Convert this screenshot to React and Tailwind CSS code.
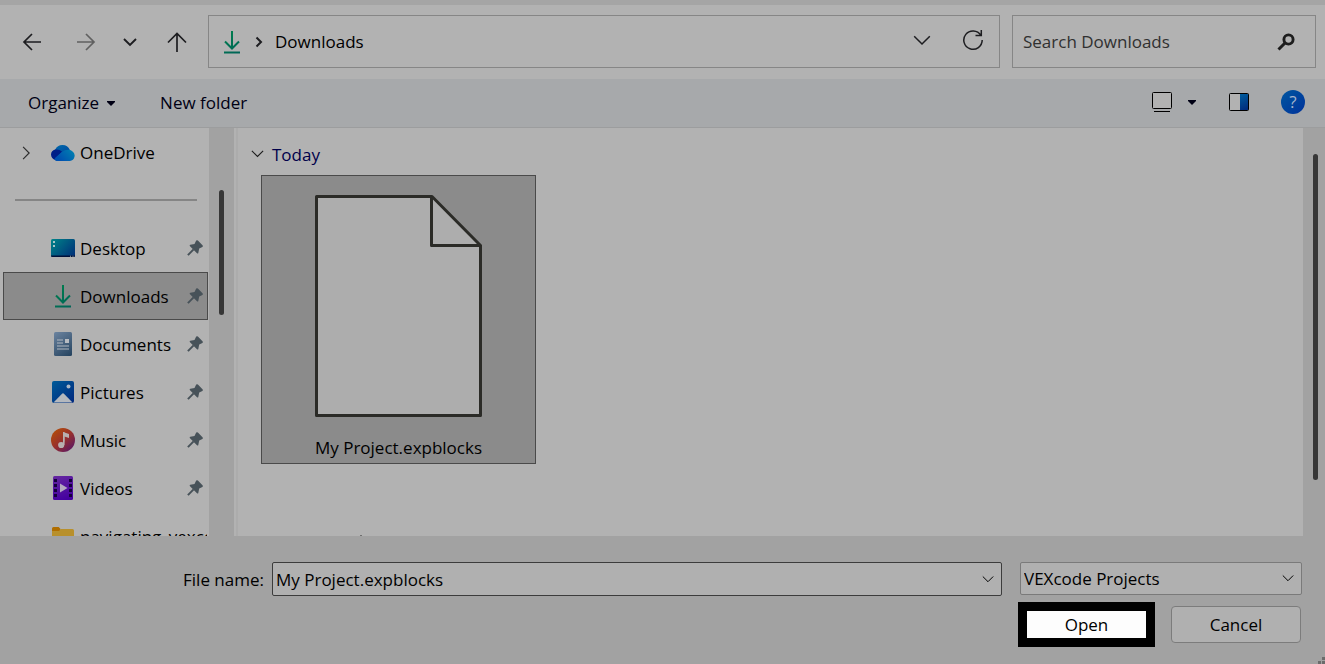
import { useState } from 'react'

const PLACES = [
  { id: 'desktop',   label: 'Desktop',   icon: DesktopIcon },
  { id: 'downloads', label: 'Downloads', icon: DownloadIcon },
  { id: 'documents', label: 'Documents', icon: DocumentsIcon },
  { id: 'pictures',  label: 'Pictures',  icon: PicturesIcon },
  { id: 'music',     label: 'Music',     icon: MusicIcon },
  { id: 'videos',    label: 'Videos',    icon: VideosIcon },
]

/* Icons */

function DownloadIcon() {
  return (
    <svg width="24" height="24" viewBox="0 0 24 24" fill="none" strokeWidth="2">
      <defs>
        <linearGradient id="dl" x1="4" y1="1" x2="20" y2="23" gradientUnits="userSpaceOnUse">
          <stop stopColor="#00804c" />
          <stop offset="1" stopColor="#006458" />
        </linearGradient>
      </defs>
      <path d="M12 1v17M5 11.5l7 7 7-7M4 22.5h16" stroke="url(#dl)" />
    </svg>
  )
}

function DesktopIcon() {
  return (
    <svg width="24" height="24" viewBox="0 0 24 24">
      <defs>
        <linearGradient id="desk" x1="2" y1="3" x2="22" y2="21" gradientUnits="userSpaceOnUse">
          <stop stopColor="#008088" />
          <stop offset="1" stopColor="#003078" />
        </linearGradient>
      </defs>
      <rect y="3" width="24" height="18" rx="1.5" fill="url(#desk)" />
      <path d="M0 19.5h24a1.5 1.5 0 0 1-1.5 1.5h-21A1.5 1.5 0 0 1 0 19.5z" fill="#00103a" />
      <path d="M2 5h2v2H2zM2 9h2v2H2z" fill="#a9c4c6" />
      <path d="M19 19.8h1v1h-1zM21.5 19.8h1v1h-1z" fill="#9aa" />
    </svg>
  )
}

function DocumentsIcon() {
  return (
    <svg width="24" height="24" viewBox="0 0 24 24">
      <defs>
        <linearGradient id="docs" x1="3" y1="0" x2="20" y2="24" gradientUnits="userSpaceOnUse">
          <stop stopColor="#6c84a0" />
          <stop offset="1" stopColor="#25435f" />
        </linearGradient>
      </defs>
      <rect x="3" width="18" height="24" rx="1.5" fill="url(#docs)" />
      <path d="M6 8h6M6 11h6M6 14h12M6 17h12" stroke="#b2b8bf" strokeWidth="1.2" />
      <rect x="14" y="7" width="4" height="4" fill="#b8bcc2" />
    </svg>
  )
}

function PicturesIcon() {
  return (
    <svg width="24" height="24" viewBox="0 0 24 24">
      <defs>
        <linearGradient id="pics" x1="2" y1="1" x2="22" y2="23" gradientUnits="userSpaceOnUse">
          <stop stopColor="#005a98" />
          <stop offset="1" stopColor="#00287e" />
        </linearGradient>
      </defs>
      <rect x="1" y="1" width="22" height="22" rx="2" fill="url(#pics)" />
      <path d="M2.5 22.5l8.3-8.600q1.200-1.200 2.400 0l8.300 8.600z" fill="#b4b8be" />
      <circle cx="17.500" cy="6.500" r="2" fill="#aab6c4" />
    </svg>
  )
}

function MusicIcon() {
  return (
    <svg width="24" height="24" viewBox="0 0 24 24">
      <defs>
        <linearGradient id="music" x1="3" y1="3" x2="20" y2="22" gradientUnits="userSpaceOnUse">
          <stop stopColor="#b04a0c" />
          <stop offset="0.5" stopColor="#98302c" />
          <stop offset="1" stopColor="#601a60" />
        </linearGradient>
      </defs>
      <circle cx="12" cy="12" r="12" fill="url(#music)" />
      <path d="M12 4l6 2v4l-4.500-1.500V17" fill="#b8b0b0" />
      <path d="M12 4h1.500v13H12z" fill="#b8b0b0" />
      <circle cx="10.200" cy="17" r="3.100" fill="#b8b0b0" />
    </svg>
  )
}

function VideosIcon() {
  return (
    <svg width="24" height="24" viewBox="0 0 24 24">
      <defs>
        <linearGradient id="vids" x1="6" y1="0" x2="14" y2="24" gradientUnits="userSpaceOnUse">
          <stop stopColor="#6426a0" />
          <stop offset="1" stopColor="#4400a0" />
        </linearGradient>
      </defs>
      <rect x="2" width="20" height="24" rx="1.5" fill="url(#vids)" />
      <path d="M3 3h3v3H3zM3 8h3v3H3zM3 13h3v3H3zM3 18h3v3H3zM18 3h3v3h-3zM18 8h3v3h-3zM18 13h3v3h-3zM18 18h3v3h-3z" fill="#14003c" />
      <path d="M9 7.5l7.500 4.500L9 16.500z" fill="#b4aac0" />
    </svg>
  )
}

function FolderIcon() {
  return (
    <svg width="24" height="24" viewBox="0 0 24 24">
      <path d="M1 4.500A1.500 1.500 0 0 1 2.500 3h5.200L9.500 5v4H1z" fill="#b06e00" />
      <path d="M1 7h7l2-2h11.500A1.500 1.500 0 0 1 23 6.500V20a1 1 0 0 1-1 1H2a1 1 0 0 1-1-1z" fill="#b8902c" />
    </svg>
  )
}

function OneDriveIcon() {
  return (
    <svg width="24" height="24" viewBox="0 0 24 24">
      <defs>
        <linearGradient id="od1" x1="5" y1="4" x2="14" y2="20" gradientUnits="userSpaceOnUse">
          <stop stopColor="#0068a8" />
          <stop offset="1" stopColor="#0040a0" />
        </linearGradient>
        <linearGradient id="od2" x1="22" y1="9" x2="10" y2="20" gradientUnits="userSpaceOnUse">
          <stop stopColor="#0080b0" />
          <stop offset="1" stopColor="#0050b0" />
        </linearGradient>
      </defs>
      <path d="M7 19A5.500 5.500 0 0 1 4.200 8.600 8 8 0 0 1 18.800 8.800L14 12z" fill="url(#od1)" />
      <path d="M4.500 19A6 6 0 0 1 0 13.500 5.500 5.500 0 0 1 4.200 8.600C7 8 9 9 11 10.500L4 18z" fill="#001e88" />
      <path d="M5.500 20C3.500 19.500 3 18 4.500 16.500L11 11C14 8.500 18.500 8 21 10A5.400 5.400 0 0 1 18.800 20z" fill="url(#od2)" />
    </svg>
  )
}

function PinIcon() {
  return (
    <svg width="16" height="16" viewBox="0 0 16 16" className="shrink-0" fill="#475259">
      <path d="M9.200.6q.9-.8 1.700 0l4.600 4.600q.8 1-.1 1.700L12.200 8.600l-.9 4.300q-.4 1.100-1.300.3L3 6.200q-.8-1 .3-1.400L7.500 3.900z" />
      <path d="M.9 15.100L6.600 9.400" stroke="#475259" strokeWidth="2" />
    </svg>
  )
}

function Chevron({ size = 12, className = '' }) {
  return (
    <svg width={size} height={size} viewBox="0 0 12 12" fill="none" stroke="currentColor" strokeWidth="1" className={className}>
      <path d="M.8 3.500L6 8.700l5.200-5.200" />
    </svg>
  )
}

function Caret() {
  return (
    <svg width="8" height="5" viewBox="0 0 8 5">
      <path d="M0 0h8v1L4 5 0 1z" fill="#000014" />
    </svg>
  )
}

function NavBar() {
  return (
    <div className="flex items-center bg-[#b2b2b2] pt-[10px] pr-[9px] pb-[11px] text-[#1d1d20]">
      <button aria-label="Back" className="flex w-16 justify-center">
        <svg width="20" height="20" viewBox="0 0 20 20" fill="none" stroke="currentColor" strokeWidth="1.700">
          <path d="M19 10H2M10 2l-8 8 8 8" />
        </svg>
      </button>
      <button aria-label="Forward" className="flex w-11 justify-center text-[#606060]">
        <svg width="20" height="20" viewBox="0 0 20 20" fill="none" stroke="currentColor" strokeWidth="1.700">
          <path d="M1 10h17M10 2l8 8-8 8" />
        </svg>
      </button>
      <button aria-label="Recent locations" className="flex w-11 justify-center">
        <svg width="14" height="14" viewBox="0 0 14 14" fill="none" stroke="currentColor" strokeWidth="1.900">
          <path d="M1 4l6 6 6-6" />
        </svg>
      </button>
      <button aria-label="Up" className="flex w-[50px] justify-center">
        <svg width="20" height="20" viewBox="0 0 20 20" fill="none" stroke="currentColor" strokeWidth="1.700">
          <path d="M10 20V2M1 10.500L10 1.500l9 9" />
        </svg>
      </button>

      <div className="ml-[6px] flex h-[53px] flex-1 items-center border border-[#868686] pr-[15px] pl-[11px]">
        <DownloadIcon />
        <svg width="8" height="12" viewBox="0 0 8 12" fill="none" stroke="currentColor" strokeWidth="2" className="ml-[11px]">
          <path d="M1.500 1.500L6 6l-4.500 4.500" />
        </svg>
        <a href="#downloads" className="ml-3 flex-1 text-black">Downloads</a>
        <div className="flex items-center gap-[31px] pb-1">
          <button aria-label="Previous locations"><Chevron size={18} /></button>
          <button aria-label="Refresh">
            <svg width="22" height="22" viewBox="0 0 22 22" fill="none" stroke="currentColor" strokeWidth="1.500">
              <path d="M20.200 11A9.200 9.200 0 1 1 18.800 6.200M19.300 1v5.500h-5.800" />
            </svg>
          </button>
        </div>
      </div>

      <div className="ml-3 flex h-[53px] w-[304px] items-center border border-[#868686] pr-5 pl-[10px]">
        <input type="search" aria-label="Search Downloads" placeholder="Search Downloads"
          className="min-w-0 flex-1 bg-transparent outline-none placeholder:text-[#303030]" />
        <svg width="18" height="18" viewBox="0 0 18 18" fill="none" stroke="#1d1d1d">
          <circle cx="11.500" cy="6.500" r="4.600" strokeWidth="2.900" />
          <path d="M8 10l-6.500 6.500" strokeWidth="3" />
        </svg>
      </div>
    </div>
  )
}

function Toolbar() {
  return (
    <div className="flex h-[49px] items-center border-b border-[#9c9d9e] bg-[#a7a9ab] pr-5 pl-7 text-[#000014]">
      <button className="flex items-center gap-2">Organize <Caret /></button>
      <button className="ml-[45px]">New folder</button>
      <div className="ml-auto flex items-center pb-0.5">
        <button aria-label="Change view" className="flex items-center gap-[15px]">
          <svg width="21" height="21" viewBox="0 0 21 21" fill="none" stroke="#000">
            <rect x=".5" y=".5" width="19" height="16" rx="1" fill="#b2b2b2" />
            <path d="M2 19.500h16" />
          </svg>
          <Caret />
        </button>
        <button aria-label="Preview pane" className="ml-[33px]">
          <svg width="20" height="18" viewBox="0 0 20 18">
            <defs>
              <linearGradient id="pane" x1="11" y1="0" x2="20" y2="18" gradientUnits="userSpaceOnUse">
                <stop stopColor="#0060a0" />
                <stop offset="1" stopColor="#002478" />
              </linearGradient>
            </defs>
            <rect x=".5" y=".5" width="19" height="17" rx="1" fill="#b2b2b2" />
            <path d="M11 1h8.500v16H11z" fill="url(#pane)" />
            <rect x=".5" y=".5" width="19" height="17" rx="1" fill="none" stroke="#000" />
          </svg>
        </button>
        <button aria-label="Help" className="ml-8 flex h-6 w-6 items-center justify-center rounded-full bg-linear-to-br from-[#0056a0] to-[#00309a] text-[#a5b5cc]">
          ?
        </button>
      </div>
    </div>
  )
}

function Sidebar({ place, onSelect }) {
  return (
    <nav className="flex w-[234px] shrink-0 overflow-hidden bg-[#b2b2b2]">
      <div className="w-[209px] pr-px pl-[3px]">
        <a href="#onedrive" className="flex h-12 items-center pt-px pl-4">
          <Chevron size={14} className="-rotate-90 text-[#2c2c2c]" />
          <span className="ml-[18px]"><OneDriveIcon /></span>
          <span className="ml-[5px]">OneDrive</span>
        </a>
        <div className="flex h-12 items-center pr-[11px] pl-3">
          <hr className="w-full border-t-2 border-[#858585]" />
        </div>
        {PLACES.map(p => (
          <button key={p.id} onClick={() => onSelect(p.id)}
            className={`flex h-12 w-full items-center border pr-1 pl-[47px] ${place === p.id ? 'border-[#4a4a4a] bg-[#8b8b8b]' : 'border-transparent'}`}>
            <p.icon />
            <span className="ml-[5px] flex-1 pt-px text-left">{p.label}</span>
            <PinIcon />
          </button>
        ))}
        <button className="flex h-12 w-full items-center overflow-hidden border border-transparent pl-[47px]">
          <span className="shrink-0"><FolderIcon /></span>
          <span className="ml-[5px] whitespace-nowrap pt-px">navigating_vexcode</span>
        </button>
      </div>
      <div className="flex-1 bg-[#a2a2a2] pt-[62px] pl-[10px]">
        <div className="h-[125px] w-[5px] rounded-full bg-[#373737]" />
      </div>
    </nav>
  )
}

function FileList({ file }) {
  return (
    <main className="flex min-w-0 flex-1 bg-[#b2b2b2]">
      <div className="ml-0.5 w-0.5 bg-[#acacac]" />
      <section className="flex flex-1 flex-col items-start pt-[11px] pl-[13px]">
        <button className="flex h-8 items-center gap-2 text-[#00004a]">
          <Chevron size={13} className="mb-1 text-[#1c1c1c]" /> Today
        </button>
        <button className="mt-1 ml-[10px] flex w-[275px] flex-col items-center border border-[#4a4a4a] bg-[#8b8b8b] pt-[19px] pb-px">
          <svg width="167" height="222" viewBox="0 0 167 222" fill="#adadad" stroke="#2b2b27" strokeWidth="3" strokeLinejoin="round">
            <path d="M1.500 1.500h115.500l48.500 49v170H1.500z" />
            <path d="M116.500 1.500v49h49" fill="none" />
          </svg>
          <span className="mt-[17px] leading-7">{file}</span>
        </button>
        <span className="mt-auto ml-[109px] h-px w-0.5 bg-[#707070]" />
      </section>
      <div className="w-[22px] bg-[#a2a2a2] pt-[26px] pl-[10px]">
        <div className="h-[326px] w-[5px] rounded-full bg-[#373737]" />
      </div>
    </main>
  )
}

export default function App() {
  const [place, setPlace] = useState('downloads')
  const [fileName, setFileName] = useState('My Project.expblocks')

  return (
    <div className="flex h-screen flex-col overflow-hidden bg-[#a2a2a2] font-['Open_Sans',sans-serif] text-[17px] leading-6 text-black">
      <div className="h-[5px] bg-[#a5a5a5]" />
      <NavBar />
      <Toolbar />
      <div className="flex min-h-0 flex-1">
        <Sidebar place={place} onSelect={setPlace} />
        <FileList file="My Project.expblocks" />
      </div>

      {/* Footer */}
      <footer className="relative pt-[26px] pr-[23px] pb-[17px]">
        <div className="flex items-start">
          <label htmlFor="file-name" className="w-[264px] pt-[6px] text-right">File name:</label>
          <div className="ml-2 flex h-[34px] flex-1 items-center rounded-xs border border-[#3c3c3c] bg-[#b0b0b0] pr-[7px] pl-[3px]">
            <input id="file-name" value={fileName} onChange={e => setFileName(e.target.value)}
              className="min-w-0 flex-1 bg-transparent pt-0.5 outline-none" />
            <button aria-label="Recent files"><Chevron /></button>
          </div>
          <div className="relative ml-[18px] w-[282px]">
            <select aria-label="File type" className="h-[33px] w-full appearance-none rounded-xs border border-[#7a7a7a] bg-[#b0b0b0] pt-px pl-[3px]">
              <option>VEXcode Projects</option>
            </select>
            <Chevron className="pointer-events-none absolute top-[10px] right-2" />
          </div>
        </div>
        <div className="mt-[6px] flex items-center justify-end gap-4 pr-px">
          <button className="h-[45px] w-[137px] border-9 border-black bg-[#fdfdfd]">Open</button>
          <button className="h-[37px] w-[130px] rounded-sm border border-[#7c7c7c] bg-[#b0b0b0]">Cancel</button>
        </div>
        <svg width="7" height="7" viewBox="0 0 7 7" className="absolute right-0 bottom-0" fill="#6c6c6c">
          <path d="M4 0h3v3H4zM0 4h3v3H0zM4 4h3v3H4z" />
        </svg>
      </footer>
    </div>
  )
}
